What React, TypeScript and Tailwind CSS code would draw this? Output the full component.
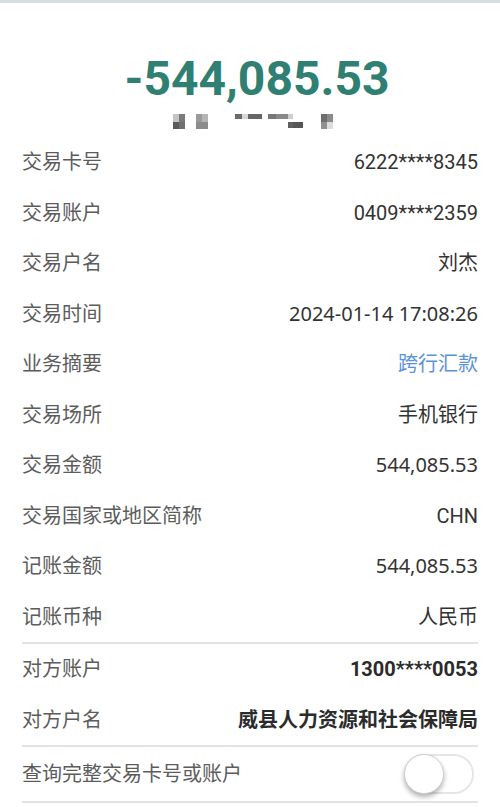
import React from 'react';

const font = { fontFamily: "Roboto, 'Noto Sans CJK SC', sans-serif" };
const noto = "font-['Noto_Sans','Noto_Sans_CJK_SC',sans-serif]";

interface RowProps {
  label: string;
  value: string;
  valueClass?: string;
}

const Row: React.FC<RowProps> = ({ label, value, valueClass = 'text-[#333333]' }) => (
  <div className="flex items-center justify-between h-[50.5px] text-[20px]">
    <span className="text-[#5c5c5c]">{label}</span>
    <span className={valueClass}>{value}</span>
  </div>
);

const Mosaic: React.FC = () => (
  <div className="flex items-start justify-center h-[16px] mt-[9px] pl-[6px]">
    <div className="flex w-[12px] h-[15px] flex-wrap">
      <div className="w-[6px] h-[8px] bg-[#c4c4c4]" />
      <div className="w-[6px] h-[8px] bg-[#7a7a7a]" />
      <div className="w-[6px] h-[7px] bg-[#5a5a5a]" />
      <div className="w-[6px] h-[7px] bg-[#707070]" />
    </div>
    <div className="flex w-[12px] h-[15px] flex-wrap ml-[11px]">
      <div className="w-[6px] h-[8px] bg-[#9a9a9a]" />
      <div className="w-[6px] h-[8px] bg-[#b5b5b5]" />
      <div className="w-[12px] h-[7px] bg-[#8c8c8c]" />
    </div>
    <div className="w-[7px] h-[5px] bg-[#6a6a6a] ml-[27px]" />
    <div className="w-[6px] h-[5px] bg-[#d8d8d8]" />
    <div className="w-[14px] h-[5px] bg-[#666666]" />
    <div className="w-[8px] h-[5px] bg-[#777777] ml-[6px]" />
    <div className="flex flex-col">
      <div className="w-[12px] h-[5px] bg-[#8a8a8a]" />
      <div className="w-[12px] h-[4px] bg-[#ffffff]" />
    </div>
    <div className="flex flex-col">
      <div className="w-[5px] h-[5px] bg-[#cfcfcf]" />
      <div className="w-[5px] h-[3px] bg-[#ffffff]" />
      <div className="w-[5px] h-[6px] bg-[#5f5f5f]" />
    </div>
    <div className="flex flex-col">
      <div className="w-[10px] h-[8px] bg-[#ffffff]" />
      <div className="w-[10px] h-[6px] bg-[#555555]" />
    </div>
    <div className="flex w-[12px] h-[15px] flex-wrap ml-[18px]">
      <div className="w-[6px] h-[8px] bg-[#6e6e6e]" />
      <div className="w-[6px] h-[8px] bg-[#8a8a8a]" />
      <div className="w-[6px] h-[7px] bg-[#909090]" />
      <div className="w-[6px] h-[7px] bg-[#dcdcdc]" />
    </div>
  </div>
);

export default function App() {
  return (
    <div className="w-[500px] h-[807px] bg-white overflow-hidden" style={font}>
      <div className="h-[3px] bg-[#d7dee2]" />

      {/* Amount header */}
      <div className="pt-[50px] flex flex-col items-center">
        <div className="text-[48px] leading-[52px] font-bold text-[#2f7f72] pl-[14px]">
          -544,085.53
        </div>
        <Mosaic />
      </div>

      {/* Details */}
      <div className="mx-[22px] mt-[7px]">
        <Row label="交易卡号" value="6222****8345" />
        <Row label="交易账户" value="0409****2359" />
        <Row label="交易户名" value="刘杰" />
        <Row label="交易时间" value="2024-01-14 17:08:26" valueClass={`text-[#333333] ${noto}`} />
        <Row label="业务摘要" value="跨行汇款" valueClass="text-[#5b93d8]" />
        <Row label="交易场所" value="手机银行" />
        <Row label="交易金额" value="544,085.53" valueClass={`text-[#333333] ${noto}`} />
        <Row label="交易国家或地区简称" value="CHN" />
        <Row label="记账金额" value="544,085.53" valueClass={`text-[#333333] ${noto}`} />
        <Row label="记账币种" value="人民币" />
        <div className="h-[2px] bg-[#e3e3e3]" />
        <Row label="对方账户" value="1300****0053" valueClass="text-[#2b2b2b] font-bold" />
        <Row label="对方户名" value="威县人力资源和社会保障局" valueClass="text-[#2b2b2b] font-bold" />
        <div className="h-[2px] bg-[#e3e3e3]" />
        <div className="flex items-center justify-between h-[54px] text-[20px]">
          <span className="text-[#5c5c5c]">查询完整交易卡号或账户</span>
          <button className="relative w-[70px] h-[40px] rounded-full border-2 border-[#e6e6e6] bg-white mr-[4px]">
            <span className="absolute left-[-2px] top-[-2px] w-[40px] h-[40px] rounded-full bg-white border border-[#d0d0d0] shadow-[0_3px_5px_rgba(0,0,0,0.3)]" />
          </button>
        </div>
        <div className="h-[2px] bg-[#e3e3e3]" />
      </div>
    </div>
  );
}
